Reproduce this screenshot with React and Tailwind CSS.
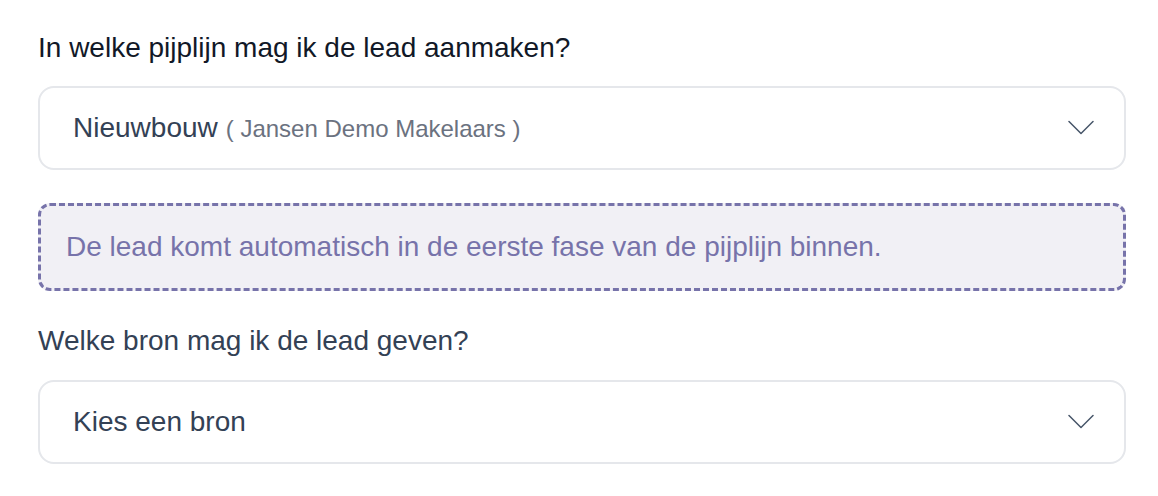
import React from "react";

function Chevron() {
  return (
    <svg width="26" height="16" viewBox="0 0 26 16" fill="none" className="shrink-0">
      <path d="M1 1.5 L13 13.5 L25 1.5" stroke="#475569" strokeWidth="1.5" strokeLinecap="round" strokeLinejoin="round" />
    </svg>
  );
}

export default function App() {
  return (
    <div className="w-[1158px] h-[496px] bg-white px-[38px] pt-[30px]" style={{ fontFamily: '"Liberation Sans", Arial, sans-serif' }}>
      <p className="text-[28px] leading-[36px] text-[#111827]">In welke pijplijn mag ik de lead aanmaken?</p>
      <div className="mt-[20px] h-[84px] w-[1088px] rounded-[16px] border-2 border-[#e5e7eb] flex items-center pl-[33px] pr-[30px]">
        <div className="flex-1 flex items-baseline">
          <span className="text-[28px] text-[#334155]">Nieuwbouw</span>
          <span className="ml-[8px] text-[24px] text-[#6b7280]">( Jansen Demo Makelaars )</span>
        </div>
        <Chevron />
      </div>
      <div className="mt-[33px] h-[88px] w-[1088px] rounded-[12px] border-[3px] border-dashed border-[#7773aa] bg-[#f1f0f5] flex items-center pl-[25px]">
        <span className="text-[28px] text-[#7773aa]">De lead komt automatisch in de eerste fase van de pijplijn binnen.</span>
      </div>
      <p className="mt-[32px] text-[28px] leading-[36px] text-[#334155]">Welke bron mag ik de lead geven?</p>
      <div className="mt-[21px] h-[84px] w-[1088px] rounded-[16px] border-2 border-[#e5e7eb] flex items-center pl-[33px] pr-[30px]">
        <span className="flex-1 text-[28px] text-[#334155]">Kies een bron</span>
        <Chevron />
      </div>
    </div>
  );
}
